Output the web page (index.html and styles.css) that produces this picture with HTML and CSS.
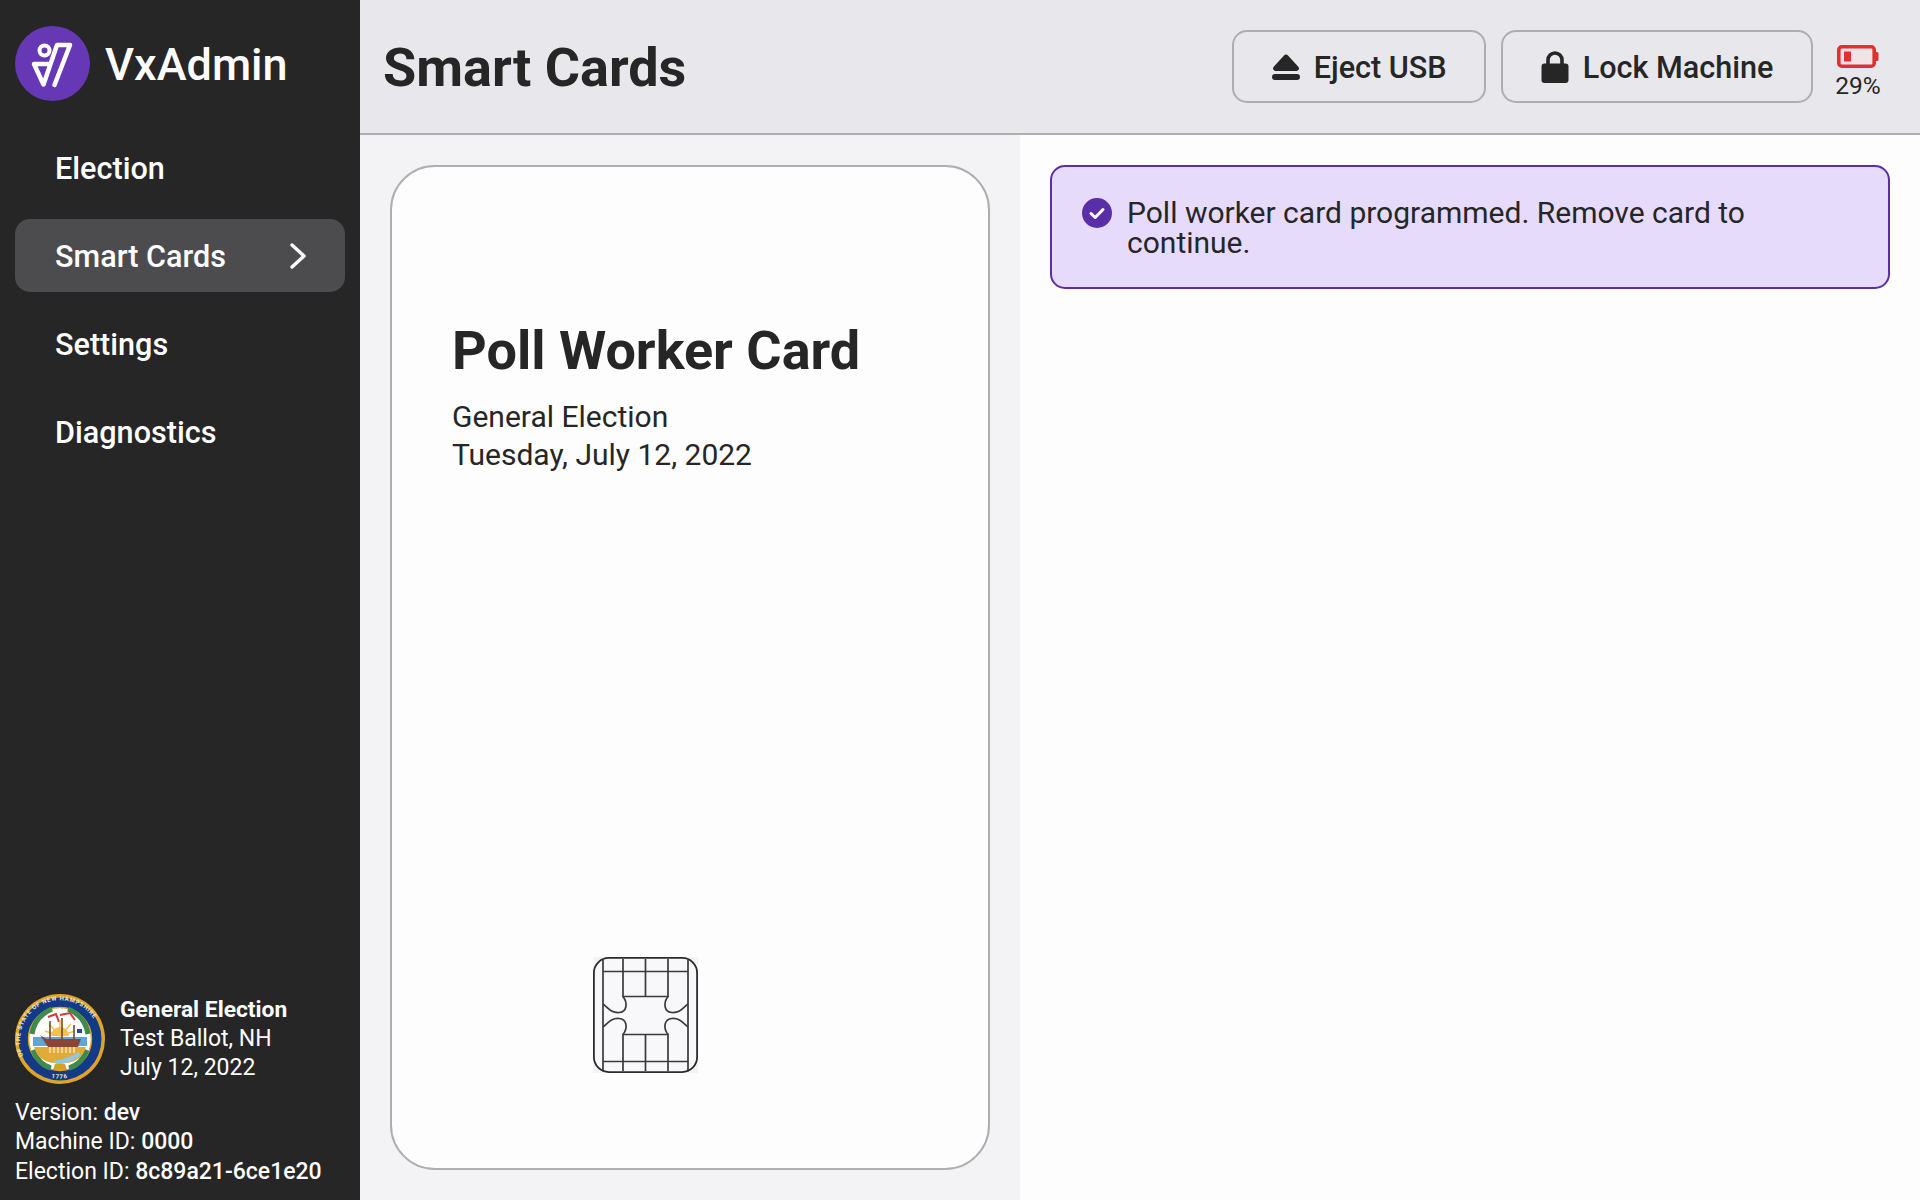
FILE: index.html
```html
<!DOCTYPE html>
<html lang="en">
<head>
  <meta charset="UTF-8">
  <title>VxAdmin</title>
  <link rel="stylesheet" href="styles.css">
</head>
<body>
  <div class="app">
    <aside class="sidebar">
      <div class="brand">
        <svg class="brand-logo" viewBox="0 0 75 75">
          <circle cx="37.5" cy="37.5" r="37.5" fill="#6638b6"/>
          <g fill="none" stroke="#fff" stroke-linecap="round" stroke-linejoin="round" stroke-width="4.500">
            <circle cx="29.500" cy="24.500" r="5" stroke-width="4"/>
            <path d="M33 38 H19 L28.500 58.500 L42 19 H55 L39.500 59"/>
          </g>
        </svg>
        <span class="brand-name">VxAdmin</span>
      </div>
      <nav class="nav">
        <a class="nav-item">Election</a>
        <a class="nav-item active">Smart Cards
          <svg class="nav-arrow" viewBox="0 0 18 28"><path d="M3 3 L15 14 L3 25" fill="none" stroke="#fff" stroke-width="3.4" stroke-linecap="round" stroke-linejoin="round"/></svg>
        </a>
        <a class="nav-item">Settings</a>
        <a class="nav-item">Diagnostics</a>
      </nav>
      <div class="sidebar-footer">
        <div class="election-info">
          <svg class="seal" viewBox="0 0 90 90">
            <defs>
              <path id="sealTop" d="M8.200 62 A40 40 0 1 1 81.800 62"/>
              <path id="sealBottom" d="M17 73 A39.500 39.500 0 0 0 73 73"/>
            </defs>
            <circle cx="45" cy="45" r="45" fill="#e0a526"/>
            <circle cx="45" cy="45" r="41.500" fill="#123a86"/>
            <text class="seal-text"><textPath href="#sealTop">OF THE STATE OF NEW HAMPSHIRE</textPath></text>
            <text class="seal-text"><textPath href="#sealBottom" startOffset="36%">1776</textPath></text>
            <circle cx="45" cy="45" r="31.500" fill="#fff" stroke="#e0a526" stroke-width="1.500"/>
            <path d="M17 40 Q20 22 37 15 M73 40 Q70 22 53 15" fill="none" stroke="#3f8a4c" stroke-width="5"/>
            <path d="M18 56 Q24 71 36 74 M72 56 Q66 71 54 74" fill="none" stroke="#3f8a4c" stroke-width="5"/>
            <path d="M33 23 L41 20 L44 28 M45 21 L55 19 L60 26" fill="none" stroke="#d0393a" stroke-width="2"/>
            <path d="M36 42 A9 9 0 0 1 54 42 Z" fill="#f4c24a"/>
            <path d="M45 42 L34 30 M45 42 L45 26 M45 42 L56 30 M45 42 L30 37 M45 42 L60 37" stroke="#f4c24a" stroke-width="1.500"/>
            <path d="M18 43 H72 V52 H18 Z" fill="#5da6d6"/>
            <path d="M19 53 H71 Q67 67 52 69 H38 Q23 67 19 53 Z" fill="#e2ab38"/>
            <path d="M38 67 Q52 65 64 58 L66 61 Q56 69 42 71 Z" fill="#8fc7e4"/>
            <path d="M25 41 L31 45 H66 L63 53 H33 Z" fill="#8c4436"/>
            <path d="M35 27 V45 M47 24 V45 M59 31 V45" stroke="#6e4a32" stroke-width="1.600"/>
            <path d="M62 35 H67 V39 H62 Z" fill="#2b4c8c"/>
            <path d="M35 53 V59 M39 53 V59 M43 53 V59 M47 53 V59 M51 53 V59 M55 53 V59 M59 53 V59" stroke="#fff" stroke-width="1"/>
            <path d="M40 70 H50 L52 76 H38 Z" fill="#d9a028"/>
          </svg>
          <div class="election-text">
            <strong>General Election</strong>
            <div>Test Ballot, NH</div>
            <div>July 12, 2022</div>
          </div>
        </div>
        <div class="version-info">
          <div>Version: <b>dev</b></div>
          <div>Machine ID: <b>0000</b></div>
          <div>Election ID: <b>8c89a21-6ce1e20</b></div>
        </div>
      </div>
    </aside>

    <div class="main">
      <header class="header">
        <h1>Smart Cards</h1>
        <div class="header-actions">
          <button class="btn">
            <svg class="btn-icon" viewBox="0 0 28 26"><path d="M14 0.500 a2.500 2.500 0 0 1 2 1 L26.500 13 a2.500 2.500 0 0 1 -2 4 H3.500 a2.500 2.500 0 0 1 -2 -4 L12 1.500 a2.500 2.500 0 0 1 2 -1 Z M3 20 H25 a3 3 0 0 1 0 6 H3 a3 3 0 0 1 0 -6 Z" fill="#262626"/></svg>
            Eject USB
          </button>
          <button class="btn">
            <svg class="btn-icon lock" viewBox="0 0 28 32"><path d="M7 13 V9 a7 7 0 0 1 14 0 V13" fill="none" stroke="#262626" stroke-width="3.600"/><rect x="0.500" y="12.500" width="27" height="19.500" rx="3" fill="#262626"/></svg>
            Lock Machine
          </button>
          <div class="battery">
            <svg class="battery-icon" viewBox="0 0 42 23">
              <rect x="1.800" y="1.800" width="35.400" height="19.400" rx="3" fill="#f0e4e6" stroke="#e22f2f" stroke-width="3.600"/>
              <rect x="37" y="7" width="4.500" height="9" rx="1.500" fill="#e22f2f"/>
              <rect x="7" y="6.500" width="7" height="10" fill="#e22f2f"/>
            </svg>
            <span>29%</span>
          </div>
        </div>
      </header>
      <div class="content">
        <section class="card-panel">
          <div class="card">
            <div class="card-body">
              <h2>Poll Worker Card</h2>
              <div class="card-meta">General Election</div>
              <div class="card-meta">Tuesday, July 12, 2022</div>
            </div>
            <svg class="chip" viewBox="0 0 105 116">
              <rect x="0" y="0" width="105" height="116" fill="#f3f3f6"/>
              <rect x="0.900" y="0.900" width="103.200" height="114.200" rx="15" fill="#f8f8fa" stroke="#2b2b2b" stroke-width="1.800"/>
              <g fill="none" stroke="#3a3a3a" stroke-width="1.700">
                <path d="M10 3 V113 M95 3 V113 M10 14.500 H95 M10 104.500 H95"/>
                <path d="M30 2 V39.500 H75 V2 M52.500 2 V39.500 M30 114 V77.500 H75 V114 M52.500 114 V77.500"/>
                <path d="M10 47 C15 51 18 56 26 55.500 C34 55 35 46 30 39.500"/>
                <path d="M95 47 C90 51 87 56 79 55.500 C71 55 70 46 75 39.500"/>
                <path d="M10 70 C15 66 18 61 26 61.500 C34 62 35 71 30 77.500"/>
                <path d="M95 70 C90 66 87 61 79 61.500 C71 62 70 71 75 77.500"/>
              </g>
            </svg>
          </div>
        </section>
        <section class="detail-panel">
          <div class="notice">
            <svg class="notice-icon" viewBox="0 0 30 30">
              <circle cx="15" cy="15" r="15" fill="#5a2ea6"/>
              <path d="M9 15.500 L13.200 19.500 L21 11.500" fill="none" stroke="#fff" stroke-width="3" stroke-linecap="round" stroke-linejoin="round"/>
            </svg>
            <p>Poll worker card programmed. Remove card to continue.</p>
          </div>
        </section>
      </div>
    </div>
  </div>
</body>
</html>
```

FILE: styles.css
```css
* {
  box-sizing: border-box;
}
body {
  margin: 0;
  font-family: Roboto, "Liberation Sans", sans-serif;
  color: #262626;
}
.app {
  display: flex;
  width: 1920px;
  height: 1200px;
  overflow: hidden;
}

/* sidebar */
.sidebar {
  display: flex;
  flex-direction: column;
  width: 360px;
  padding: 26px 15px 14px;
  background: #262626;
  color: #fdfdfd;
}
.brand {
  display: flex;
  align-items: center;
  gap: 15px;
  height: 75px;
}
.brand-logo {
  width: 75px;
  height: 75px;
}
.brand-name {
  margin-top: 2px;
  font-size: 45px;
  font-weight: 500;
}
.nav {
  display: flex;
  flex-direction: column;
  gap: 15px;
  margin-top: 30px;
}
.nav-item {
  display: flex;
  align-items: center;
  justify-content: space-between;
  height: 73px;
  padding: 1px 38px 0 40px;
  border-radius: 15px;
  font-size: 30.6px;
  font-weight: 500;
}
.nav-item.active {
  background: #4c4c4f;
}
.nav-arrow {
  width: 18px;
  height: 28px;
}
.sidebar-footer {
  margin-top: auto;
}
.election-info {
  display: flex;
  align-items: center;
  gap: 15px;
}
.seal {
  width: 90px;
  height: 90px;
  flex-shrink: 0;
}
.seal-text {
  font-size: 6px;
  font-weight: 700;
  fill: #f0e6c8;
  letter-spacing: 0.7px;
}
.election-text,
.version-info {
  font-size: 23px;
  line-height: 29.5px;
}
.election-text {
  line-height: 29px;
}
.election-text strong {
  font-size: 22.8px;
  font-weight: 700;
}
.version-info {
  margin-top: 14px;
}
.version-info b {
  font-weight: 500;
}

/* header */
.main {
  flex: 1;
  display: flex;
  flex-direction: column;
}
.header {
  display: flex;
  align-items: center;
  justify-content: space-between;
  height: 135px;
  padding: 0 36px 0 23px;
  background: #e8e8ec;
  border-bottom: 2px solid #aeaeb2;
}
.header h1 {
  margin: 2px 0 0;
  font-size: 54px;
  font-weight: 700;
}
.header-actions {
  display: flex;
  align-items: center;
  gap: 15px;
}
.btn {
  display: flex;
  align-items: center;
  gap: 14px;
  height: 73px;
  padding: 1px 37.5px 0;
  background: transparent;
  border: 2px solid #aeaeb2;
  border-radius: 15px;
  font-family: inherit;
  font-size: 30.6px;
  font-weight: 500;
  color: #262626;
}
.btn-icon {
  width: 28px;
  height: 26px;
}
.btn-icon.lock {
  height: 32px;
}
.battery {
  display: flex;
  flex-direction: column;
  align-items: center;
  gap: 3px;
  width: 52px;
  margin-left: 4px;
  padding-top: 11px;
  font-size: 24.5px;
}
.battery-icon {
  width: 42px;
  height: 23px;
}

/* content */
.content {
  flex: 1;
  display: flex;
  min-height: 0;
}
.card-panel {
  width: 660px;
  padding: 30px;
  background: #f3f3f6;
}
.card {
  display: flex;
  flex-direction: column;
  height: 1005px;
  padding-bottom: 95px;
  background: #fdfdfd;
  border: 2px solid #aeaeb2;
  border-radius: 45px;
}
.card-body {
  flex: 1;
  padding: 152px 60px 0;
}
.card-body h2 {
  margin: 0 0 16px;
  font-size: 54px;
  font-weight: 700;
}
.card-meta {
  font-size: 30px;
  line-height: 38px;
}
.chip {
  width: 105px;
  height: 116px;
  margin-left: 201px;
}
.detail-panel {
  flex: 1;
  padding: 30px;
  background: #fdfdfd;
}
.notice {
  display: flex;
  gap: 15px;
  height: 124px;
  padding: 31px 30px 0 30px;
  background: #e6dbfa;
  border: 2px solid #5a2ea6;
  border-radius: 15px;
}
.notice-icon {
  width: 30px;
  height: 30px;
  flex-shrink: 0;
}
.notice p {
  width: 670px;
  margin: 0;
  font-size: 30px;
  line-height: 30px;
}
```
